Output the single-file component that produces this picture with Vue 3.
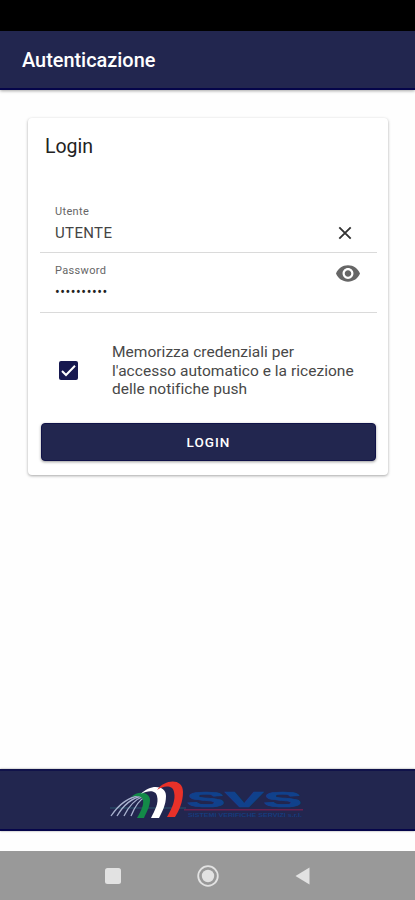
<script setup>
import { ref } from 'vue';

const username = ref('UTENTE');
const password = ref('••••••••••');
const remember = ref(true);

const clearUsername = () => {
  username.value = '';
};

const toggleRemember = () => {
  remember.value = !remember.value;
};
</script>

<template>
  <div class="screen">
    <div class="status-bar"></div>
    <header class="toolbar">
      <h1 class="toolbar-title">Autenticazione</h1>
    </header>

    <main class="content">
      <section class="card">
        <h2 class="card-title">Login</h2>

        <div class="field field-user">
          <div class="field-text">
            <span class="field-label">Utente</span>
            <span class="field-value">{{ username }}</span>
          </div>
          <svg class="icon-clear" viewBox="0 0 14 14" @click="clearUsername">
            <path d="M1.3 1.3L12.7 12.7M12.7 1.3L1.3 12.7" stroke="#333" stroke-width="1.9" />
          </svg>
        </div>

        <div class="field field-password">
          <div class="field-text">
            <span class="field-label">Password</span>
            <span class="field-value dots">{{ password }}</span>
          </div>
          <svg class="icon-eye" viewBox="1 4.5 22 15">
            <path
              fill="#666"
              d="M12 4.5C7 4.5 2.73 7.61 1 12c1.73 4.39 6 7.5 11 7.5s9.27-3.11 11-7.5c-1.73-4.39-6-7.5-11-7.5zM12 17c-2.76 0-5-2.24-5-5s2.24-5 5-5 5 2.24 5 5-2.24 5-5 5zm0-8c-1.66 0-3 1.34-3 3s1.34 3 3 3 3-1.34 3-3-1.34-3-3-3z"
            />
          </svg>
        </div>

        <div class="remember" @click="toggleRemember">
          <span class="checkbox">
            <svg v-if="remember" viewBox="0 0 19 19">
              <path d="M3 10L7 14L16 4.8" fill="none" stroke="#fff" stroke-width="2" />
            </svg>
          </span>
          <p class="remember-text">
            Memorizza credenziali per<br />l'accesso automatico e la ricezione<br />delle notifiche push
          </p>
        </div>

        <button class="login-btn">LOGIN</button>
      </section>
    </main>

    <footer class="footer">
      <svg class="logo" viewBox="0 0 200 46">
        <g fill="none">
          <path d="M2 30H78" stroke="#2c6a78" stroke-width="0.7" />
          <g stroke="#a9b2cf" stroke-width="1.3">
            <path d="M3 38Q15 20 33 17" />
            <path d="M9 38Q19 21 34 18" />
            <path d="M16 38Q23 23 36 18" />
            <path d="M23 38Q29 23 37 19" />
          </g>
        </g>
        <path fill="#138a48" d="M23 19C30 12 42 14 42 22C42 29 38 35 36 40H29C33 33 36 27 35 22C34 18 29 17 23 19Z" />
        <path fill="#fff" d="M33 16C42 6 58 7 58 18C58 27 54 34 51 40H43C47 32 51 25 49 18C48 12 40 12 33 16Z" />
        <path fill="#e83129" d="M49 12C57 1 75 0 75 14C75 24 71 33 67 39H59C64 30 68 22 66 14C65 7 56 7 49 12Z" />
        <text class="logo-name" x="79" y="28.5" textLength="115" lengthAdjust="spacingAndGlyphs">SVS</text>
        <path d="M76 31.7H195" stroke="#69204f" stroke-width="1.6" />
        <text class="logo-sub" x="80" y="38.5" textLength="114" lengthAdjust="spacingAndGlyphs">SISTEMI VERIFICHE SERVIZI s.r.l.</text>
      </svg>
    </footer>

    <nav class="nav-bar">
      <svg viewBox="0 0 24 24">
        <rect x="4" y="4" width="16" height="16" rx="2.5" fill="#e2e2e2" />
      </svg>
      <svg viewBox="0 0 24 24">
        <circle cx="12" cy="12" r="9.8" fill="none" stroke="#e2e2e2" stroke-width="1.8" />
        <circle cx="12" cy="12" r="6.2" fill="#e2e2e2" />
      </svg>
      <svg viewBox="0 0 24 24">
        <path d="M4.5 12L18.5 3.5V20.5Z" fill="#e2e2e2" />
      </svg>
    </nav>
  </div>
</template>

<style>
body {
  margin: 0;
  background: #fefefe;
}
</style>

<style scoped>
.screen {
  display: flex;
  flex-direction: column;
  width: 415px;
  height: 900px;
  overflow: hidden;
  background: #fefefe;
  font-family: Roboto, "Liberation Sans", sans-serif;
  color: #333;
}

.status-bar {
  flex: none;
  height: 31px;
  background: #000;
}

.toolbar {
  flex: none;
  box-sizing: border-box;
  height: 59px;
  padding-left: 22px;
  display: flex;
  align-items: center;
  background: #22264f;
  border-bottom: 2px solid #05054a;
  box-shadow: 0 1px 3px rgba(0, 0, 0, 0.35);
}

.toolbar-title {
  margin: 2px 0 0;
  font-size: 19.9px;
  font-weight: 500;
  line-height: 24px;
  color: #fff;
}

.content {
  flex: 1;
  padding: 28px 27px 0 28px;
}

.card {
  box-sizing: border-box;
  height: 357px;
  padding: 0 12px;
  background: #fff;
  border-radius: 4px;
  box-shadow: 0 1px 3px rgba(0, 0, 0, 0.35);
  overflow: hidden;
}

.card-title {
  margin: 17px 0 0 5px;
  font-size: 19.5px;
  font-weight: 400;
  line-height: 24px;
  color: #222;
}

.field {
  box-sizing: border-box;
  display: flex;
  justify-content: space-between;
  height: 60px;
  padding-left: 15px;
  margin-right: -1px;
  border-bottom: 1px solid #dadada;
}

.field-user {
  margin-top: 36px;
  height: 58px;
}

.field-text {
  display: flex;
  flex-direction: column;
}

.field-label {
  margin-top: 10px;
  font-size: 11px;
  line-height: 14px;
  letter-spacing: 0.35px;
  color: #666;
}

.field-password .field-label {
  margin-top: 11px;
}

.field-value {
  margin-top: 4px;
  font-size: 15px;
  line-height: 20px;
  letter-spacing: 0.35px;
  color: #444;
}

.dots {
  font-size: 14px;
  letter-spacing: 0.55px;
  color: #222;
}

.icon-clear {
  width: 14px;
  height: 14px;
  margin: 31px 25px 0 0;
}

.icon-eye {
  width: 24px;
  height: 17px;
  margin: 12px 17px 0 0;
}

.remember {
  display: flex;
  align-items: center;
  margin-top: 30px;
  padding-left: 19px;
}

.checkbox {
  width: 19px;
  height: 19px;
  border-radius: 2px;
  background: #171950;
}

.checkbox svg {
  display: block;
}

.remember-text {
  margin: 0 0 0 34px;
  font-size: 15.5px;
  line-height: 18.5px;
  letter-spacing: 0.03px;
  color: #484848;
  white-space: nowrap;
}

.login-btn {
  display: block;
  width: 335px;
  height: 38px;
  margin: 24px 0 0 1px;
  padding: 0;
  border: 1px solid #101248;
  border-radius: 4px;
  background: #22264f;
  box-shadow: 0 1px 3px rgba(0, 0, 0, 0.4);
  color: #fff;
  font-family: inherit;
  font-size: 13.5px;
  font-weight: 500;
  letter-spacing: 1px;
}

.footer {
  flex: none;
  box-sizing: border-box;
  height: 62px;
  margin-bottom: 20px;
  padding: 7px 0 0 108px;
  background: #22264f;
  border-top: 2px solid #10124a;
  border-bottom: 2px solid #05054a;
  box-shadow: 0 0 2px rgba(0, 0, 0, 0.4);
}

.logo {
  display: block;
  width: 200px;
  height: 46px;
}

.logo-name {
  font-family: "Liberation Sans", sans-serif;
  font-size: 22px;
  font-weight: 700;
  fill: #10418c;
  stroke: #10418c;
  stroke-width: 0.7px;
}

.logo-sub {
  font-family: "Liberation Sans", sans-serif;
  font-size: 6px;
  font-weight: 700;
  fill: #163b7c;
}

.nav-bar {
  flex: none;
  display: flex;
  justify-content: center;
  align-items: center;
  gap: 71px;
  height: 49px;
  background: #999;
}

.nav-bar svg {
  width: 24px;
  height: 24px;
}
</style>
